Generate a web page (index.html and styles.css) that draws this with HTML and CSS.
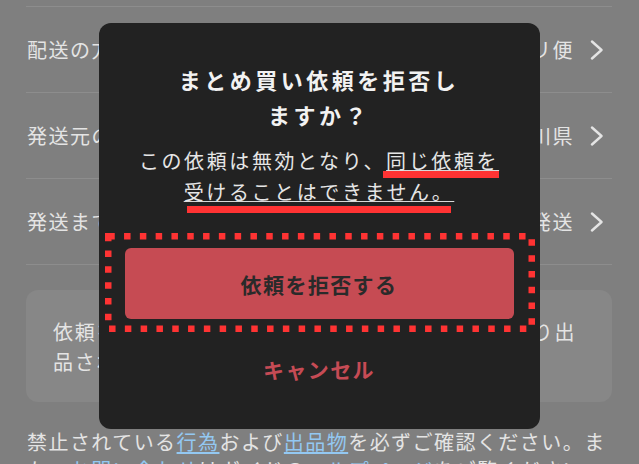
FILE: index.html
```html
<!DOCTYPE html>
<html lang="ja">
<head>
<meta charset="utf-8">
<link rel="stylesheet" href="styles.css">
</head>
<body>
<div class="page">
  <div class="rows">
    <div class="row"><span class="label">配送の方法</span><span class="value">らくらくメルカリ便</span><svg class="chev" width="14" height="20" viewBox="0 0 14 20"><path d="M2 1.5 L11.5 10 L2 18.5" fill="none" stroke="#e4e4e4" stroke-width="2.4" stroke-linecap="round" stroke-linejoin="round"/></svg></div>
    <div class="row"><span class="label">発送元の地域</span><span class="value">神奈川県</span><svg class="chev" width="14" height="20" viewBox="0 0 14 20"><path d="M2 1.5 L11.5 10 L2 18.5" fill="none" stroke="#e4e4e4" stroke-width="2.4" stroke-linecap="round" stroke-linejoin="round"/></svg></div>
    <div class="row"><span class="label">発送までの日数</span><span class="value">1~2日で発送</span><svg class="chev" width="14" height="20" viewBox="0 0 14 20"><path d="M2 1.5 L11.5 10 L2 18.5" fill="none" stroke="#e4e4e4" stroke-width="2.4" stroke-linecap="round" stroke-linejoin="round"/></svg></div>
  </div>
  <div class="card">依頼を拒否すると相手に通知され、商品は通常通り出<br>品されます。</div>
  <p class="note">禁止されている<a class="link">行為</a>および<a class="link">出品物</a>を必ずご確認ください。また、<a class="link">お問い合わせ</a>はガイドの<a class="link">ヘルプページ</a>をご覧ください。</p>
</div>

<div class="overlay">
  <div class="dialog">
    <h2 class="title">まとめ買い依頼を拒否し<br>ますか？</h2>
    <p class="message">この依頼は無効となり、<span class="mark mark-a">同じ依頼を</span><br><span class="mark mark-b">受けることはできません。</span></p>
    <button class="reject">依頼を拒否する</button>
    <button class="cancel">キャンセル</button>
    <svg class="focus" width="430" height="99" viewBox="0 0 430 99"><rect x="3.25" y="3.25" width="423.5" height="92.5" fill="none" stroke="#ff3333" stroke-width="6.5" stroke-dasharray="6.5 9.3"/></svg>
  </div>
</div>
</body>
</html>
```

FILE: styles.css
```css
* { box-sizing: border-box; }

html, body {
  margin: 0;
  padding: 0;
  background: #7f7f7f;
  overflow: hidden;
  height: 464px;
}

body {
  font-family: "Noto Sans CJK JP", "Noto Sans", sans-serif;
  color: #e4e4e4;
}

.page {
  padding: 6px 27px 0 26px;
}

.rows {
  border-bottom: 1px solid #8d8d8d;
}

.row {
  height: 86px;
  border-top: 1px solid #8d8d8d;
  display: flex;
  align-items: center;
  font-size: 20px;
  letter-spacing: 1.5px;
  padding-left: 1px;
}

.label {
  flex: 1;
  white-space: nowrap;
}

.value {
  white-space: nowrap;
  margin-right: 16px;
}

.chev {
  margin-right: 8px;
  flex: none;
}

.card {
  margin-top: 25px;
  background: #878787;
  border-radius: 12px;
  padding: 27px 10px 25px 27px;
  font-size: 20px;
  letter-spacing: 1.8px;
  line-height: 30px;
  height: 112px;
  white-space: nowrap;
}

.note {
  margin: 26px 0 0 1px;
  font-size: 20px;
  letter-spacing: 1.45px;
  line-height: 28px;
}

.link {
  color: #93c8f2;
  text-decoration: underline;
  text-underline-offset: 2px;
}

.overlay {
  position: fixed;
  inset: 0;
  display: flex;
  justify-content: center;
  align-items: flex-start;
  padding-top: 23px;
}

.dialog {
  position: relative;
  width: 441px;
  height: 406px;
  margin-left: -1px;
  background: #222222;
  border-radius: 12px;
  padding: 39px 26px 10px;
  display: flex;
  flex-direction: column;
  align-items: stretch;
  text-align: center;
}

.title {
  margin: 0;
  font-size: 22px;
  line-height: 35px;
  letter-spacing: 3.5px;
  font-weight: 700;
  color: #f2f2f2;
}

.message {
  margin: 13px 0 0;
  font-size: 20px;
  line-height: 31px;
  letter-spacing: 2.6px;
  color: #e6e6e6;
}

.mark {
  position: relative;
  text-decoration: underline;
  text-decoration-color: #d8d8d8;
  text-decoration-thickness: 1px;
  text-underline-offset: 1px;
}

.mark::after {
  content: "";
  position: absolute;
  height: 7px;
  background: #ff3333;
}

.mark-a::after {
  left: -3px;
  right: 0;
  top: 25px;
}

.mark-b::after {
  left: 3px;
  right: 3px;
  top: 28.5px;
}

.reject {
  margin-top: 41px;
  height: 71px;
  border: none;
  border-radius: 6px;
  background: #c64b53;
  color: #2a2a2a;
  font-family: inherit;
  font-size: 21px;
  font-weight: 700;
  letter-spacing: 1.4px;
  padding: 0;
}

.cancel {
  border: none;
  background: transparent;
  padding: 35px 0;
  line-height: 30px;
  font-family: inherit;
  font-size: 21px;
  font-weight: 700;
  letter-spacing: 1.4px;
  color: #c64b55;
}

.focus {
  position: absolute;
  left: 6px;
  top: 210px;
}
```
